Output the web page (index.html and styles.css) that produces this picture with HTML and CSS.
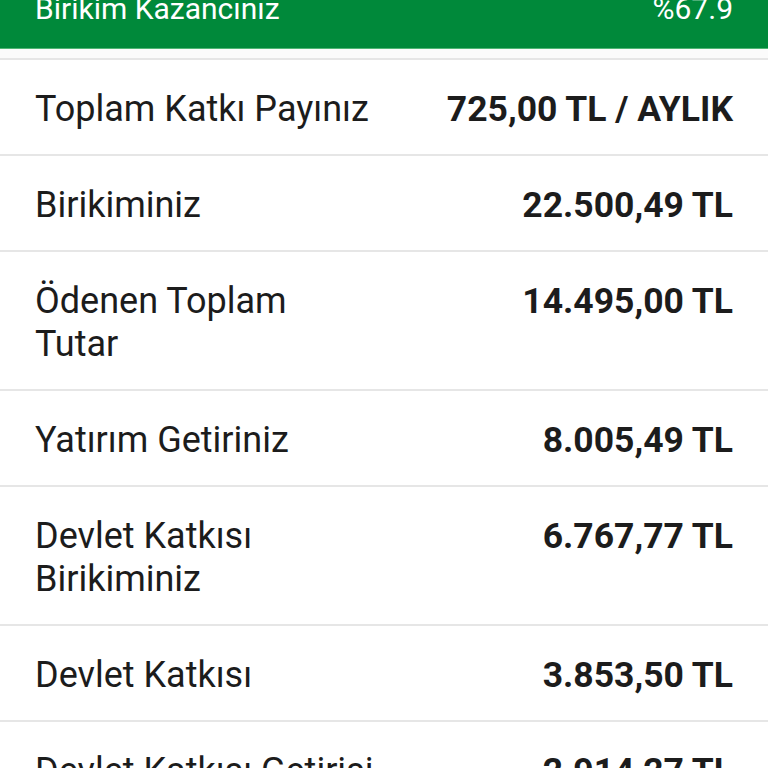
FILE: index.html
```html
<!DOCTYPE html>
<html lang="tr">
<head>
<meta charset="utf-8">
<link rel="stylesheet" href="styles.css">
</head>
<body>
<div class="screen">
  <header class="summary">
    <span class="summary-label">Birikim Kazancınız</span>
    <span class="summary-value">%67.9</span>
  </header>
  <div class="spacer"></div>
  <ul class="list">
    <li class="row"><span class="label">Toplam Katkı Payınız</span><span class="value">725,00 TL / AYLIK</span></li>
    <li class="row"><span class="label">Birikiminiz</span><span class="value">22.500,49 TL</span></li>
    <li class="row"><span class="label">Ödenen Toplam Tutar</span><span class="value">14.495,00 TL</span></li>
    <li class="row"><span class="label">Yatırım Getiriniz</span><span class="value">8.005,49 TL</span></li>
    <li class="row"><span class="label">Devlet Katkısı Birikiminiz</span><span class="value">6.767,77 TL</span></li>
    <li class="row"><span class="label">Devlet Katkısı</span><span class="value">3.853,50 TL</span></li>
    <li class="row"><span class="label">Devlet Katkısı Getirisi</span><span class="value">2.914,27 TL</span></li>
  </ul>
</div>
</body>
</html>
```
FILE: styles.css
```css
html, body {
  margin: 0;
  padding: 0;
  background: #ffffff;
}
body {
  font-family: Roboto, "Noto Sans", sans-serif;
  color: #1c1c1c;
  overflow: hidden;
}
.screen {
  width: 768px;
}
.summary {
  height: 49px;
  box-sizing: border-box;
  background: #00893a;
  color: #ffffff;
  display: flex;
  justify-content: space-between;
  align-items: flex-end;
  padding: 0 35px 22px 35px;
  font-size: 30px;
  line-height: 35px;
  border-bottom: 1px solid #4fb574;
}
.spacer {
  height: 9px;
  background: #fbfbfb;
}
.list {
  list-style: none;
  margin: 0;
  padding: 0;
  border-top: 2px solid #e6e6e6;
}
.row {
  display: flex;
  justify-content: space-between;
  align-items: flex-start;
  gap: 24px;
  padding: 28px 35px 23px 35px;
  border-bottom: 2px solid #e6e6e6;
  font-size: 36px;
  line-height: 43px;
}
.label {
  max-width: 339px;
}
.value {
  font-size: 35.5px;
  font-weight: 700;
  white-space: nowrap;
  text-align: right;
}
```
